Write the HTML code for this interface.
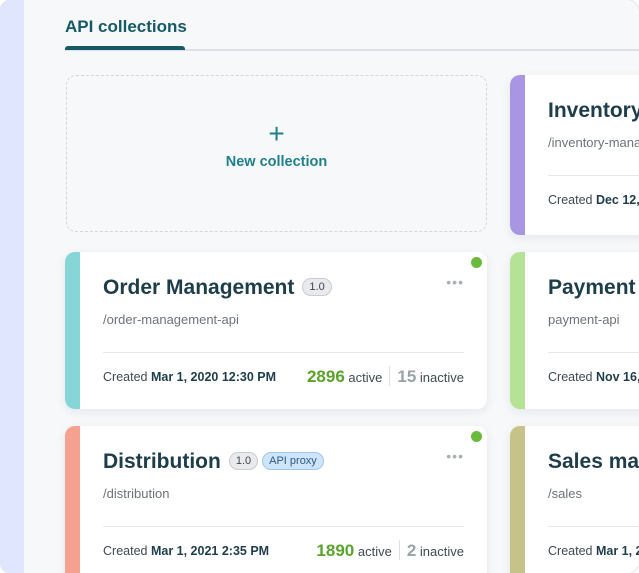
<!DOCTYPE html>
<html><head><meta charset="utf-8"><style>
*{margin:0;padding:0;box-sizing:border-box}
body{width:639px;height:573px;overflow:hidden;background:#fff;font-family:"Liberation Sans",sans-serif;position:relative}
.frame{position:absolute;left:0;top:0;width:639px;height:573px;border-radius:12px;overflow:hidden;background:#f6f8fa;outline:1px solid #e3e6ea}
.strip{position:absolute;left:0;top:0;width:24px;height:573px;background:#dfe6fd}
.title{position:absolute;left:65px;top:17px;font-size:17px;font-weight:bold;color:#155a66}
.tabline{position:absolute;left:65px;top:49px;width:574px;height:2px;background:#dde1e5}
.tabact{position:absolute;left:65px;top:46px;width:120px;height:4px;background:#155a66;border-radius:3px 3px 0 0}
.new{position:absolute;left:66px;top:75px;width:421px;height:157px;border:1.5px dashed #d3d7db;border-radius:10px;text-align:center;color:#1f7f8a}
.new .p{font-size:28px;margin-top:44px;line-height:28px;font-weight:300}
.new .t{font-size:14.5px;margin-top:6px;font-weight:bold}
.card{position:absolute;background:#fff;border-radius:10px;overflow:hidden;box-shadow:0 3px 10px rgba(30,50,70,.08)}
.bar{position:absolute;left:0;top:0;bottom:0;width:15px}
.ct{position:absolute;left:38px;font-size:21px;font-weight:bold;color:#1e3d4a;white-space:nowrap}
.tag{display:inline-block;font-size:11px;font-weight:normal;color:#444;background:#e8eaed;border:1px solid #c9ccd0;border-radius:9px;padding:2px 6px;vertical-align:4px;margin-left:8px}
.tag.b{background:#cfe4fb;border-color:#9cc6ef;color:#2a5a86;margin-left:4px}
.path{position:absolute;left:38px;font-size:13px;color:#6b7479;white-space:nowrap}
.div{position:absolute;left:38px;right:23px;height:1px;background:#e6e8ea}
.ft{position:absolute;left:38px;font-size:12.5px;color:#3d4a50;white-space:nowrap}
.ft b{color:#1e3d4a}
.st{position:absolute;right:23px;font-size:13px;color:#3d4a50;white-space:nowrap}
.st .a{color:#5aa32a;font-size:17px;font-weight:bold}
.st .i{color:#9aa3a8;font-size:17px;font-weight:bold}
.st .sep{display:inline-block;width:1px;height:20px;background:#dde0e3;vertical-align:-4px;margin:0 7px}
.dot{position:absolute;width:11px;height:11px;border-radius:50%;background:#6abb3c}
.more{position:absolute;right:23px;font-size:14px;color:#a9b0b4;letter-spacing:1px;line-height:8px}
</style></head><body>
<div class="frame">
<div class="strip"></div>
<div class="title">API collections</div>
<div class="tabline"></div><div class="tabact"></div>
<div class="new"><div class="p">+</div><div class="t">New collection</div></div>

<div class="card" style="left:65px;top:252px;width:422px;height:157px">
 <div class="bar" style="background:#86d6d8"></div>
 <div class="ct" style="top:24px">Order Management<span class="tag">1.0</span></div>
 <div class="path" style="top:60px">/order-management-api</div>
 <div class="div" style="top:100px"></div>
 <div class="ft" style="top:118px">Created <b>Mar 1, 2020 12:30 PM</b></div>
 <div class="st" style="top:114px"><span class="a">2896</span> active<span class="sep"></span><span class="i">15</span> inactive</div>
 <div class="more" style="top:26px">•••</div>
</div>
<div class="dot" style="left:471px;top:257px"></div>

<div class="card" style="left:65px;top:426px;width:422px;height:160px">
 <div class="bar" style="background:#f4a28f"></div>
 <div class="ct" style="top:24px">Distribution<span class="tag">1.0</span><span class="tag b">API proxy</span></div>
 <div class="path" style="top:60px">/distribution</div>
 <div class="div" style="top:100px"></div>
 <div class="ft" style="top:118px">Created <b>Mar 1, 2021 2:35 PM</b></div>
 <div class="st" style="top:114px"><span class="a">1890</span> active<span class="sep"></span><span class="i">2</span> inactive</div>
 <div class="more" style="top:26px">•••</div>
</div>
<div class="dot" style="left:471px;top:431px"></div>

<div class="card" style="left:510px;top:75px;width:200px;height:160px">
 <div class="bar" style="background:#a996e3"></div>
 <div class="ct" style="top:24px">Inventory Management</div>
 <div class="path" style="top:60px">/inventory-management</div>
 <div class="div" style="top:100px;right:0"></div>
 <div class="ft" style="top:118px">Created <b>Dec 12, 2020</b></div>
</div>
<div class="card" style="left:510px;top:252px;width:200px;height:157px">
 <div class="bar" style="background:#b6e295"></div>
 <div class="ct" style="top:24px">Payment</div>
 <div class="path" style="top:60px">payment-api</div>
 <div class="div" style="top:100px;right:0"></div>
 <div class="ft" style="top:118px">Created <b>Nov 16, 2020</b></div>
</div>
<div class="card" style="left:510px;top:426px;width:200px;height:160px">
 <div class="bar" style="background:#c6c38a"></div>
 <div class="ct" style="top:24px">Sales management</div>
 <div class="path" style="top:60px">/sales</div>
 <div class="div" style="top:100px;right:0"></div>
 <div class="ft" style="top:118px">Created <b>Mar 1, 2021</b></div>
</div>
</div>
</body></html>
